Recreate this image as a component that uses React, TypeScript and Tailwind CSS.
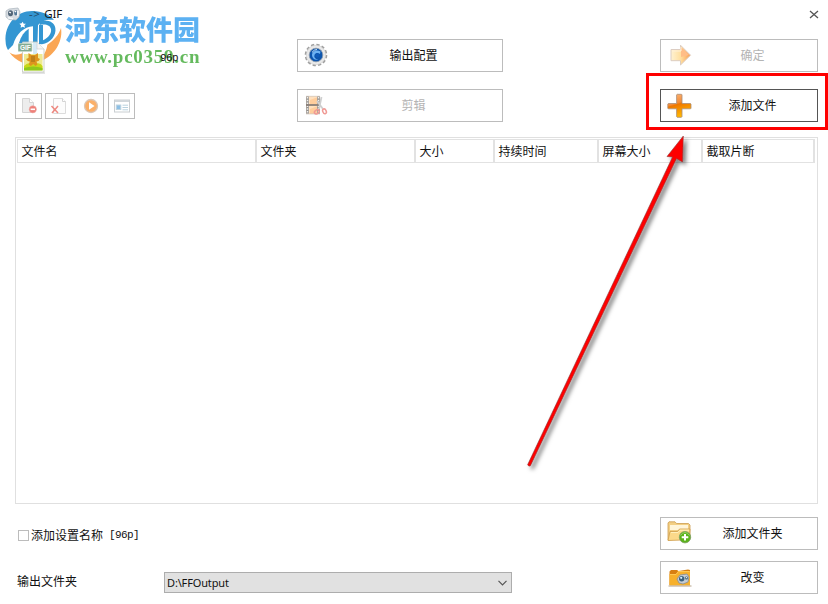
import type { ReactNode } from "react";
import { clsx } from "clsx";

const columns = [
  { label: "文件名", width: "w-[239px]" },
  { label: "文件夹", width: "w-[159px]" },
  { label: "大小", width: "w-[79px]" },
  { label: "持续时间", width: "w-[104px]" },
  { label: "屏幕大小", width: "w-[104px]" },
  { label: "截取片断", width: "w-[112px]" },
];

interface ActionButtonProps {
  label: string;
  icon: ReactNode;
  disabled?: boolean;
  active?: boolean;
  className?: string;
}

function ActionButton({ label, icon, disabled, active, className }: ActionButtonProps) {
  return (
    <button
      disabled={disabled}
      className={clsx(
        "flex h-[33px] items-center border bg-white pl-[6px]",
        active ? "border-[#555]" : "border-[#bcbcbc]",
        disabled ? "text-[#b4b4b4]" : "text-[#111]",
        className
      )}
    >
      <span className="h-[26px] w-[26px] shrink-0">{icon}</span>
      <span className="flex-1 pb-[2px] pr-[5px] text-center">{label}</span>
    </button>
  );
}

function ToolButton({ children, className }: { children: ReactNode; className?: string }) {
  return (
    <button className={clsx("flex h-[26px] w-[27px] items-center justify-center border border-[#bcbcbc] bg-white", className)}>
      {children}
    </button>
  );
}

function GearIcon() {
  return (
    <svg width="26" height="26" viewBox="0 0 26 26">
      <circle cx="12" cy="12" r="10.3" fill="#f4f4f4" stroke="#a0a0a0" strokeWidth="2" strokeDasharray="3.2 2.2" />
      <circle cx="12" cy="12" r="9.7" fill="#e9e9e9" stroke="#d0d0d0" strokeWidth=".6" />
      <circle cx="12" cy="12" r="6.8" fill="#0d55ad" stroke="#8a98a8" strokeWidth=".8" />
      <path d="M16.5 8.6C13 5.9 7.9 8 8 12.2c.1 3.3 3.3 5.2 6.1 4.2-3.2-.3-4.4-2.3-3.6-4.4.9-2.3 3.8-2.5 5.5-.9z" fill="#6db2f2" />
      <circle cx="13.4" cy="12.6" r="2" fill="#0f5bb9" />
      <path d="M8 9.4q2-3 5-2.9" fill="none" stroke="#c4e1fa" strokeWidth="1" />
    </svg>
  );
}

function FilmIcon() {
  return (
    <svg width="26" height="26" viewBox="0 0 26 26">
      <rect x="2" y="3" width="14" height="18" fill="#ffe0bd" />
      <path d="M6 12V7l8-3v8zM6 21v-5l8-3v8z" fill="#ffcd9c" />
      <path d="M3.5 3v18M14.5 3v18" stroke="#8e8e8e" strokeWidth="2.6" />
      <path d="M3.5 4v17M14.5 4v17" stroke="#f0f0f0" strokeWidth="1.4" strokeDasharray="1.5 1.3" />
      <path d="M2 12h14" stroke="#8b7f79" strokeWidth="1.8" />
      <path d="M2 3.3h14M2 20.9h14" stroke="#d3c8bf" strokeWidth=".8" />
      <path d="M17.5 4L15 16M13 8l6 8" stroke="#cfcfcf" strokeWidth="1.8" />
      <ellipse cx="12.8" cy="18.8" rx="2.6" ry="1.8" fill="none" stroke="#f09a95" strokeWidth="1.5" transform="rotate(-35 12.8 18.8)" />
      <ellipse cx="20.5" cy="18.3" rx="1.7" ry="2.5" fill="none" stroke="#f09a95" strokeWidth="1.5" transform="rotate(-25 20.5 18.3)" />
    </svg>
  );
}

function ArrowIcon() {
  return (
    <svg width="26" height="26" viewBox="0 0 26 26">
      <defs>
        <linearGradient id="next" x1="0" x2="1">
          <stop offset="0" stopColor="#fff2d2" />
          <stop offset=".5" stopColor="#ffdf9f" />
          <stop offset="1" stopColor="#f99c52" />
        </linearGradient>
      </defs>
      <path d="M4 6.5h9.5V2.2L23.5 12.2 13.5 22v-4.3H4z" fill="url(#next)" stroke="#dccdc2" strokeWidth="1" />
      <path d="M14 4l8 8-8 2z" fill="#ffbd87" />
      <path d="M14 4v4H5" fill="none" stroke="#fff1da" strokeWidth="1" />
    </svg>
  );
}

function PlusIcon() {
  return (
    <svg width="26" height="26" viewBox="0 0 26 26">
      <defs>
        <linearGradient id="plus" x1="0" y1="0" x2="0.3" y2="1">
          <stop offset="0" stopColor="#ffb87a" />
          <stop offset="0.46" stopColor="#f28c39" />
          <stop offset="0.52" stopColor="#ee7700" />
          <stop offset="1" stopColor="#ffb400" />
        </linearGradient>
      </defs>
      <path d="M10.2 1.3h4.3l.5.5v8.7h8.5l.5.5v4.3l-.5.5H15v7.9l-.6.6h-4.2l-.6-.6v-7.9H1.3l-.5-.5V11l.5-.5h8.3V1.8z" fill="url(#plus)" stroke="#a88e79" strokeWidth=".8" />
    </svg>
  );
}

function FolderAddIcon() {
  return (
    <svg width="26" height="26" viewBox="0 0 26 26">
      <path d="M1 19V2l1-1.2h6l1.5 1.7h12L23 4v13z" fill="#f3cf83" stroke="#cb9d50" strokeWidth=".8" />
      <path d="M3 4h18v5H3z" fill="#fff5d9" />
      <path d="M1 19.5l2-9h7.5l2-2.5H23l-1 10.8z" fill="#fcd98a" stroke="#cf9e4c" strokeWidth=".8" />
      <path d="M4 11.5h7l2-2.3h9" fill="none" stroke="#fff0bd" />
      <circle cx="18" cy="16.2" r="5.7" fill="#5ab31b" stroke="#82a468" strokeWidth=".9" />
      <path d="M13.5 14.5q4.5-6 9 0" fill="none" stroke="#91d15e" strokeWidth="1" />
      <path d="M18 12.9v6.6M14.7 16.2h6.6" stroke="#fff" strokeWidth="2" />
    </svg>
  );
}

function FolderEyeIcon() {
  return (
    <svg width="26" height="26" viewBox="0 0 26 26">
      <path d="M2.5 6.5L4 5h6l1.5 1L21 4.5 23 5v15H2.5z" fill="#d77f11" />
      <path d="M2.5 20.5V9h6.3l2.4-3H23v14.5z" fill="#f7b02a" />
      <path d="M3 9.5h6l2.4-3H22.5" fill="none" stroke="#ffce60" strokeWidth=".8" />
      <path d="M1.5 21h23" stroke="#b5a087" strokeWidth="1" />
      <path d="M10 14l3-4 7-1 2 3-1 5-5 2-4-1z" fill="#c5ccd4" stroke="#858d94" strokeWidth=".8" />
      <circle cx="14.7" cy="13.7" r="2.7" fill="#3c617c" />
      <circle cx="14.2" cy="12.8" r="1.1" fill="#d8effa" />
      <circle cx="19.5" cy="13" r="1.7" fill="#64808f" />
      <path d="M19 12l1 1" stroke="#fff" strokeWidth=".8" />
    </svg>
  );
}

function TitleIcon() {
  return (
    <svg width="16" height="14" viewBox="0 0 16 14">
      <path d="M1 4l3-2 9-1 2 4-1 5-3 3-7-.5-3-2.5z" fill="#d7dce1" stroke="#aab4bd" strokeWidth=".7" />
      <ellipse cx="5.5" cy="6.2" rx="2.5" ry="3" fill="#526577" />
      <ellipse cx="10.8" cy="5.8" rx="1.7" ry="2.7" fill="#557795" />
      <path d="M4.3 5l1.5 1M10 4l1 1" stroke="#fff" strokeWidth="1.5" />
      <path d="M3 10.8l5 1M12.8 4v5" stroke="#f5f7f9" strokeWidth="1.5" />
    </svg>
  );
}

// File type badge shown left of the preset name
function GifFileIcon() {
  return (
    <svg width="30" height="33" viewBox="0 0 30 33">
      <path d="M4.5 1h14.5l7 7v23H4.5z" fill="#fff" fillOpacity=".8" stroke="#c2c8bb" strokeWidth=".8" />
      <path d="M19 1v7h7" fill="#f5f5f5" stroke="#cfcfcf" strokeWidth=".7" />
      <rect x="6" y="13" width="18.5" height="16" fill="#eeea91" />
      <path d="M6 25q4-4 7-2h4q5-2 7.5 2v4.2H6z" fill="#c8d819" />
      <path d="M6 27q9-3 18.5 0v2.5H6z" fill="#8fc81d" />
      <path d="M10.5 12l3 2h3.5l3-2v5l2 1-1.5 2-2 .5 1 3-2 1.5-2.2-2-2.5 2-2-1.5 1-3-2-.5L8 18l2.5-1z" fill="#dd941e" />
      <path d="M13 15h4v6h-4z" fill="#bd801b" />
      <rect x="0" y="2.5" width="14" height="8" rx="1" fill="#82aa91" stroke="#c8dccb" strokeWidth=".7" />
      <text x="2" y="9.2" fill="#fff" fontFamily="Liberation Sans, sans-serif" fontSize="6.5" fontWeight="bold">GIF</text>
      <path d="M4 32h23" stroke="#bbb" strokeWidth=".8" />
    </svg>
  );
}

function WatermarkLogo() {
  return (
    <svg width="60" height="58" viewBox="9 27 180 174">
      <path d="M17 126C12 72 52 32 98 33c27 0 51 11 64 27-22-3-39 3-48 16l-3 96H99V79c-27 2-50 22-60 56l-15 15c-4-7-7-15-7-24z" fill="#3496d2" />
      <path d="M57 128c6-20 16-34 29-42v51l-29 2z" fill="#3496d2" />
      <path d="M119 64c22-7 44 1 47 20 4 23-15 44-40 49l-9-1V75h12v46c17-8 26-21 24-33-2-13-17-17-34-13z" fill="#3496d2" />
      <path d="M183 84c7 43-23 91-76 105 25-17 33-40 35-55 20-13 34-29 41-50z" fill="#faa654" />
      <path d="M28 157c11 9 25 9 40 2v29c-17-7-31-17-40-31z" fill="#faa654" />
      <path d="M68 65l3 6 7 0-5 5 2 7-7-3-6 3 1-7-5-5 7-1z" fill="#fff" />
    </svg>
  );
}

function Watermark() {
  return (
    <div className="pointer-events-none absolute left-[3px] top-[9px] flex">
      <WatermarkLogo />
      <div className="w-[145px] pl-[2px] pt-[5px] opacity-90">
        <div className="h-[31px] whitespace-nowrap font-['Noto_Sans_CJK_SC',sans-serif] text-[27px] font-black leading-[29px] text-[#4ba9f1]">河东软件园</div>
        <div className="mt-[2px] whitespace-nowrap font-['Liberation_Serif',serif] text-[19px] font-bold leading-[20px] tracking-[0.75px] text-[#55b34d]">www.pc0359.cn</div>
      </div>
    </div>
  );
}

export default function App() {
  return (
    <div className="relative isolate flex h-[604px] w-[828px] flex-col overflow-hidden bg-white font-['Noto_Sans_CJK_SC',sans-serif] text-[12px] leading-[16px] text-[#111]">
      <Watermark />

      <header className="relative flex h-[39px] items-start justify-between pl-[5px] pr-[9px] pt-[6px]">
        <div className="flex items-center">
          <TitleIcon />
          <span className="ml-[8px] flex gap-[4px] font-['Noto_Sans',sans-serif] text-[11.5px]">
            <span className="tracking-[0.5px] text-[#244b68]">-&gt;</span>
            <span className="tracking-[-0.2px]">GIF</span>
          </span>
        </div>
        <svg className="mt-[4px]" width="10" height="10" viewBox="0 0 10 10">
          <path d="M1 1l8 7M9 1L1 8" stroke="#555" strokeWidth="1.3" />
        </svg>
      </header>

      <section className="relative flex h-[98px] pl-[15px] pr-[10px]">
        <div className="w-[282px]">
          <div className="flex h-[54px] pl-[3px]">
            <div className="mt-[2px]"><GifFileIcon /></div>
            <span className="ml-[112px] mt-[11px] font-['Liberation_Mono',monospace] text-[11px] tracking-[-0.6px]">96p</span>
          </div>
          <div className="flex">
            <ToolButton>
              <svg width="18" height="18" viewBox="0 0 18 18">
                <path d="M2.5 1.5h7l4 4v10h-11z" fill="#ededed" stroke="#d4d4d4" />
                <path d="M9.5 1.5v4h4" fill="#fff" stroke="#d4d4d4" />
                <circle cx="12.8" cy="12.3" r="3.6" fill="#ee8079" stroke="#edaaa5" strokeWidth=".6" />
                <path d="M10.6 12.3H15" stroke="#fff" strokeWidth="1.6" />
              </svg>
            </ToolButton>
            <ToolButton className="ml-[3px]">
              <svg width="18" height="18" viewBox="0 0 18 18">
                <path d="M3.5 1.5h9l3 3v12h-12z" fill="#fcfcfc" stroke="#dcdcdc" />
                <path d="M12.5 1.5v3h3" fill="#fff" stroke="#d3d3d3" />
                <path d="M1.5 9l6.5 7M8 9l-6 7" stroke="#ef8981" strokeWidth="1.5" />
              </svg>
            </ToolButton>
            <ToolButton className="ml-[5px]">
              <svg width="16" height="16" viewBox="0 0 16 16">
                <circle cx="8" cy="8" r="6.5" fill="#fbb069" stroke="#dac6b6" strokeWidth="1.3" />
                <path d="M6 4.2L11.5 8 6 11.8z" fill="#fff" />
              </svg>
            </ToolButton>
            <ToolButton className="ml-[4px]">
              <svg width="18" height="16" viewBox="0 0 18 16">
                <rect x="1.5" y="2" width="15" height="12" fill="#fff" stroke="#c9ced1" />
                <path d="M2 3h14" stroke="#d1d7db" strokeWidth="2" />
                <rect x="3.3" y="7" width="4.5" height="4.5" fill="#8cbfe5" stroke="#bdd3e0" />
                <path d="M9.5 7.2H15M9.5 9.5H15M9.5 11.8H15" stroke="#b8d2df" />
              </svg>
            </ToolButton>
          </div>
        </div>
        <div className="flex w-[363px] flex-col gap-[17px]">
          <ActionButton className="w-[206px]" label="输出配置" icon={<GearIcon />} />
          <ActionButton className="w-[206px]" label="剪辑" icon={<FilmIcon />} disabled />
        </div>
        <div className="flex w-[158px] flex-col gap-[17px]">
          <ActionButton label="确定" icon={<ArrowIcon />} disabled />
          <ActionButton label="添加文件" icon={<PlusIcon />} active />
        </div>
      </section>

      <main className="mx-[15px] h-[367px] w-[803px] shrink-0 border border-[#e0e0e0] p-[1px]">
        <div className="flex h-[24px] w-[798px] border-y border-l border-[#e2e2e2]">
          {columns.map((column) => (
            <div key={column.label} className={clsx("shrink-0 border-r-2 border-[#e2e2e2] pl-[3.5px] leading-[22px]", column.width)}>
              {column.label}
            </div>
          ))}
        </div>
      </main>

      <footer className="flex pl-[17px] pr-[10px] pt-[13px]">
        <div className="w-[643px]">
          <label className="mt-[10px] flex h-[17px] items-center">
            <span className="ml-[1px] h-[11px] w-[11px] border border-[#bcbcbc]" />
            <span className="ml-[2px] pb-[2px]">添加设置名称</span>
            <span className="ml-[6px] pb-[1px] font-['Liberation_Mono',monospace] text-[11px] tracking-[-0.6px]">[96p]</span>
          </label>
          <div className="mt-[28px] flex items-start">
            <span className="w-[147px] pt-[1px]">输出文件夹</span>
            <button className="flex h-[21px] w-[348px] items-center justify-between border border-[#adadad] bg-[#e1e1e1] pl-[2px] pr-[4px] font-['Noto_Sans',sans-serif] text-[11px]">
              <span className="tracking-[-0.15px]">D:\FFOutput</span>
              <svg width="9" height="6" viewBox="0 0 9 6">
                <path d="M.5.8l4 4 4-4" fill="none" stroke="#555" strokeWidth="1.2" />
              </svg>
            </button>
          </div>
        </div>
        <div className="flex w-[158px] flex-col gap-[11px]">
          <ActionButton label="添加文件夹" icon={<FolderAddIcon />} />
          <ActionButton label="改变" icon={<FolderEyeIcon />} />
        </div>
      </footer>

      {/* Pointer and frame around the add-file button */}
      <div className="pointer-events-none absolute left-[646px] top-[73px] h-[57px] w-[182px] border-[3px] border-[#fe0000]" />
      <svg className="pointer-events-none absolute left-[515px] top-[130px]" width="185" height="350" viewBox="0 0 185 350">
        <defs>
          <filter id="shadow" x="-20%" y="-20%" width="140%" height="140%">
            <feDropShadow dx="3" dy="3" stdDeviation="2" floodColor="#000" floodOpacity=".5" />
          </filter>
        </defs>
        <g filter="url(#shadow)" stroke="#8d3838" strokeWidth=".6">
          <path d="M168.3 6L167.5 32l-6-3.5L15.4 335.8q-1.8 1-2.8-1L157.5 27l-5.5-.5z" fill="#fe0000" />
        </g>
      </svg>
    </div>
  );
}
